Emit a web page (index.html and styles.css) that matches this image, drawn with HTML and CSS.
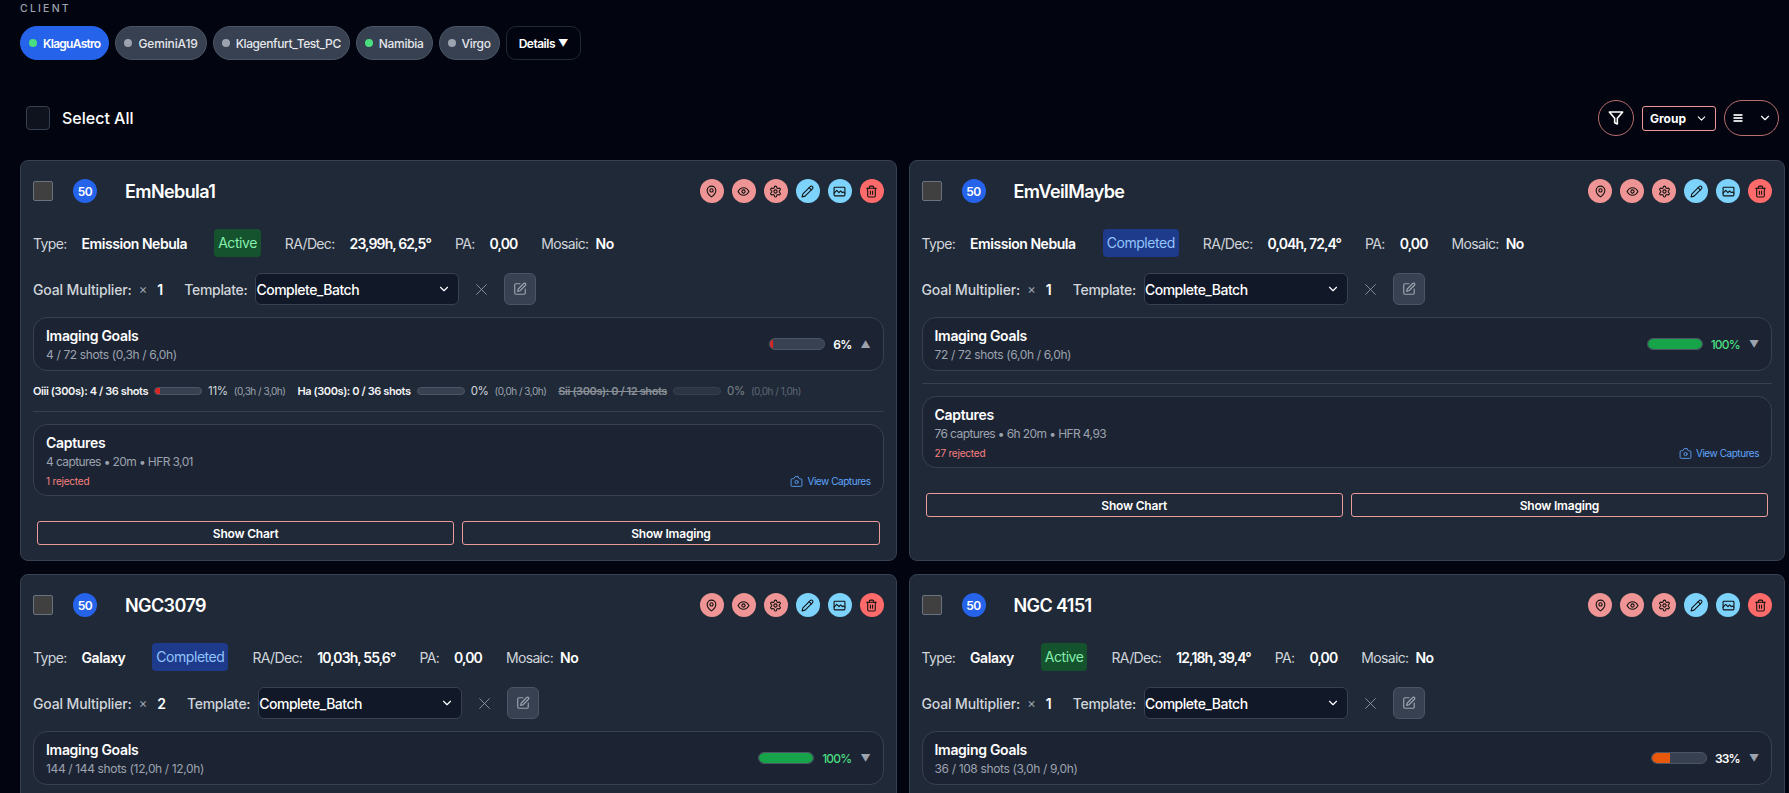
FILE: index.html
```html
<!DOCTYPE html>
<html lang="en">
<head>
<meta charset="utf-8">
<title>Targets</title>
<link rel="stylesheet" href="styles.css">
</head>
<body>
<svg class="sprite" width="0" height="0" aria-hidden="true">
  <symbol id="i-pin" viewBox="0 0 24 24"><path d="M20 10c0 6-8 12-8 12s-8-6-8-12a8 8 0 0 1 16 0Z"/><circle cx="12" cy="10" r="3"/></symbol>
  <symbol id="i-eye" viewBox="0 0 24 24"><path d="M2 12s3.6-7 10-7 10 7 10 7-3.6 7-10 7-10-7-10-7Z"/><circle cx="12" cy="12" r="3"/></symbol>
  <symbol id="i-cog" viewBox="0 0 24 24"><path d="M12.22 2h-.44a2 2 0 0 0-2 2v.18a2 2 0 0 1-1 1.73l-.43.25a2 2 0 0 1-2 0l-.15-.08a2 2 0 0 0-2.73.73l-.22.38a2 2 0 0 0 .73 2.73l.15.1a2 2 0 0 1 1 1.72v.51a2 2 0 0 1-1 1.74l-.15.09a2 2 0 0 0-.73 2.73l.22.38a2 2 0 0 0 2.73.73l.15-.08a2 2 0 0 1 2 0l.43.25a2 2 0 0 1 1 1.73V20a2 2 0 0 0 2 2h.44a2 2 0 0 0 2-2v-.18a2 2 0 0 1 1-1.73l.43-.25a2 2 0 0 1 2 0l.15.08a2 2 0 0 0 2.73-.73l.22-.39a2 2 0 0 0-.73-2.73l-.15-.08a2 2 0 0 1-1-1.74v-.5a2 2 0 0 1 1-1.74l.15-.09a2 2 0 0 0 .73-2.73l-.22-.38a2 2 0 0 0-2.73-.73l-.15.08a2 2 0 0 1-2 0l-.43-.25a2 2 0 0 1-1-1.73V4a2 2 0 0 0-2-2z"/><circle cx="12" cy="12" r="3"/></symbol>
  <symbol id="i-pencil" viewBox="0 0 24 24"><path d="M17 3a2.85 2.83 0 1 1 4 4L7.5 20.5 2 22l1.5-5.5Z"/><path d="m15 5 4 4"/></symbol>
  <symbol id="i-image" viewBox="0 0 24 24"><rect x="2" y="4" width="20" height="16" rx="1.5"/><path d="M2 15l5-5 4 4 3-3 3 3 2-1 3 2"/></symbol>
  <symbol id="i-trash" viewBox="0 0 24 24"><path d="M3 6h18"/><path d="M19 6v14a2 2 0 0 1-2 2H7a2 2 0 0 1-2-2V6"/><path d="M8 6V4a2 2 0 0 1 2-2h4a2 2 0 0 1 2 2v2"/><path d="M10 11v6"/><path d="M14 11v6"/></symbol>
  <symbol id="i-filter" viewBox="0 0 24 24"><polygon points="22 3 2 3 10 12.46 10 19 14 21 14 12.46 22 3"/></symbol>
  <symbol id="i-chevron" viewBox="0 0 24 24"><polyline points="6 9 12 15 18 9"/></symbol>
  <symbol id="i-menu" viewBox="0 0 24 24"><path d="M3 6h18"/><path d="M3 12h18"/><path d="M3 18h18"/></symbol>
  <symbol id="i-x" viewBox="0 0 24 24"><path d="M3 3l18 18"/><path d="M21 3 3 21"/></symbol>
  <symbol id="i-edit" viewBox="0 0 24 24"><path d="M12 3H5a2 2 0 0 0-2 2v14a2 2 0 0 0 2 2h14a2 2 0 0 0 2-2v-7"/><path d="M18.375 2.625a2.121 2.121 0 1 1 3 3L12 15l-4 1 1-4Z"/></symbol>
  <symbol id="i-camera" viewBox="0 0 24 24"><path d="M14.5 3h-5L7 7H4a2 2 0 0 0-2 2v10a2 2 0 0 0 2 2h16a2 2 0 0 0 2-2V9a2 2 0 0 0-2-2h-3l-2.5-4z"/><circle cx="12" cy="13" r="3"/></symbol>
</svg>

<main class="page">
  <section class="clients">
    <div class="clients-label">CLIENT</div>
    <div class="pills">
      <button class="pill pill-active"><span class="dot dot-on"></span>KlaguAstro</button>
      <button class="pill pill-roomy"><span class="dot"></span>GeminiA19</button>
      <button class="pill pill-long"><span class="dot"></span>Klagenfurt_Test_PC</button>
      <button class="pill"><span class="dot dot-on"></span>Namibia</button>
      <button class="pill"><span class="dot"></span>Virgo</button>
      <button class="pill pill-details">Details <span class="caret">▼</span></button>
    </div>
  </section>

  <section class="toolbar">
    <label class="select-all"><span class="box box-lg"></span>Select All</label>
    <div class="tools">
      <button class="tool tool-round"><svg class="ico ico-filter"><use href="#i-filter"/></svg></button>
      <button class="tool tool-group">Group<svg class="ico ico-chev"><use href="#i-chevron"/></svg></button>
      <button class="tool tool-menu"><svg class="ico ico-menu"><use href="#i-menu"/></svg><svg class="ico ico-chev"><use href="#i-chevron"/></svg></button>
    </div>
  </section>

  <section class="grid">

    <article class="card">
      <header class="card-head">
        <span class="box"></span><span class="prio">50</span><h2 class="name">EmNebula1</h2>
        <div class="actions">
          <button class="act act-rose"><svg class="ico"><use href="#i-pin"/></svg></button>
          <button class="act act-rose"><svg class="ico"><use href="#i-eye"/></svg></button>
          <button class="act act-rose"><svg class="ico"><use href="#i-cog"/></svg></button>
          <button class="act act-sky"><svg class="ico"><use href="#i-pencil"/></svg></button>
          <button class="act act-sky"><svg class="ico"><use href="#i-image"/></svg></button>
          <button class="act act-red"><svg class="ico"><use href="#i-trash"/></svg></button>
        </div>
      </header>
      <div class="meta">
        <span class="kv"><span class="k">Type:</span><b class="v">Emission Nebula</b></span>
        <span class="status status-active">Active</span>
        <span class="kv"><span class="k">RA/Dec:</span><b class="v v-num">23,99h, 62,5°</b></span>
        <span class="kv"><span class="k">PA:</span><b class="v v-num">0,00</b></span>
        <span class="kv kv-tight"><span class="k">Mosaic:</span><b class="v">No</b></span>
      </div>
      <div class="settings">
        <span class="k k-strong">Goal Multiplier:</span><span class="times">×</span><b class="mult">1</b>
        <span class="k k-strong tpl">Template:</span>
        <span class="select">Complete_Batch<svg class="ico ico-chev"><use href="#i-chevron"/></svg></span>
        <svg class="ico ico-x"><use href="#i-x"/></svg>
        <button class="edit"><svg class="ico"><use href="#i-edit"/></svg></button>
      </div>
      <div class="panel panel-goals">
        <div><h3 class="panel-title">Imaging Goals</h3><p class="panel-sub">4 / 72 shots (0,3h / 6,0h)</p></div>
        <div class="goal-right">
          <span class="bar"><span class="fill fill-red fill-6"></span></span>
          <span class="pct">6%</span><span class="tri">▲</span>
        </div>
      </div>
      <div class="filters">
        <span class="flt"><b>Oiii (300s): 4 / 36 shots</b><span class="bar bar-sm"><span class="fill fill-red fill-11"></span></span><span class="fp">11%</span><span class="ft">(0,3h / 3,0h)</span></span>
        <span class="flt"><b>Ha (300s): 0 / 36 shots</b><span class="bar bar-sm"></span><span class="fp">0%</span><span class="ft">(0,0h / 3,0h)</span></span>
        <span class="flt flt-off"><b>Sii (300s): 0 / 12 shots</b><span class="bar bar-sm"></span><span class="fp">0%</span><span class="ft">(0,0h / 1,0h)</span></span>
      </div>
      <hr class="rule">
      <div class="panel panel-caps">
        <h3 class="panel-title">Captures</h3>
        <p class="panel-sub panel-sub-caps">4 captures • 20m • HFR 3,01</p>
        <div class="caps-foot"><span class="rej">1 rejected</span><a class="view"><svg class="ico"><use href="#i-camera"/></svg>View Captures</a></div>
      </div>
      <div class="btns"><button class="btn">Show Chart</button><button class="btn">Show Imaging</button></div>
    </article>

    <article class="card">
      <header class="card-head">
        <span class="box"></span><span class="prio">50</span><h2 class="name">EmVeilMaybe</h2>
        <div class="actions">
          <button class="act act-rose"><svg class="ico"><use href="#i-pin"/></svg></button>
          <button class="act act-rose"><svg class="ico"><use href="#i-eye"/></svg></button>
          <button class="act act-rose"><svg class="ico"><use href="#i-cog"/></svg></button>
          <button class="act act-sky"><svg class="ico"><use href="#i-pencil"/></svg></button>
          <button class="act act-sky"><svg class="ico"><use href="#i-image"/></svg></button>
          <button class="act act-red"><svg class="ico"><use href="#i-trash"/></svg></button>
        </div>
      </header>
      <div class="meta">
        <span class="kv"><span class="k">Type:</span><b class="v">Emission Nebula</b></span>
        <span class="status status-done">Completed</span>
        <span class="kv"><span class="k">RA/Dec:</span><b class="v v-num">0,04h, 72,4°</b></span>
        <span class="kv"><span class="k">PA:</span><b class="v v-num">0,00</b></span>
        <span class="kv kv-tight"><span class="k">Mosaic:</span><b class="v">No</b></span>
      </div>
      <div class="settings">
        <span class="k k-strong">Goal Multiplier:</span><span class="times">×</span><b class="mult">1</b>
        <span class="k k-strong tpl">Template:</span>
        <span class="select">Complete_Batch<svg class="ico ico-chev"><use href="#i-chevron"/></svg></span>
        <svg class="ico ico-x"><use href="#i-x"/></svg>
        <button class="edit"><svg class="ico"><use href="#i-edit"/></svg></button>
      </div>
      <div class="panel panel-goals">
        <div><h3 class="panel-title">Imaging Goals</h3><p class="panel-sub">72 / 72 shots (6,0h / 6,0h)</p></div>
        <div class="goal-right">
          <span class="bar"><span class="fill fill-green fill-100"></span></span>
          <span class="pct pct-done">100%</span><span class="tri">▼</span>
        </div>
      </div>
      <hr class="rule">
      <div class="panel panel-caps">
        <h3 class="panel-title">Captures</h3>
        <p class="panel-sub panel-sub-caps">76 captures • 6h 20m • HFR 4,93</p>
        <div class="caps-foot"><span class="rej">27 rejected</span><a class="view"><svg class="ico"><use href="#i-camera"/></svg>View Captures</a></div>
      </div>
      <div class="btns"><button class="btn">Show Chart</button><button class="btn">Show Imaging</button></div>
    </article>

    <article class="card">
      <header class="card-head">
        <span class="box"></span><span class="prio">50</span><h2 class="name">NGC3079</h2>
        <div class="actions">
          <button class="act act-rose"><svg class="ico"><use href="#i-pin"/></svg></button>
          <button class="act act-rose"><svg class="ico"><use href="#i-eye"/></svg></button>
          <button class="act act-rose"><svg class="ico"><use href="#i-cog"/></svg></button>
          <button class="act act-sky"><svg class="ico"><use href="#i-pencil"/></svg></button>
          <button class="act act-sky"><svg class="ico"><use href="#i-image"/></svg></button>
          <button class="act act-red"><svg class="ico"><use href="#i-trash"/></svg></button>
        </div>
      </header>
      <div class="meta">
        <span class="kv"><span class="k">Type:</span><b class="v">Galaxy</b></span>
        <span class="status status-done">Completed</span>
        <span class="kv"><span class="k">RA/Dec:</span><b class="v v-num">10,03h, 55,6°</b></span>
        <span class="kv"><span class="k">PA:</span><b class="v v-num">0,00</b></span>
        <span class="kv kv-tight"><span class="k">Mosaic:</span><b class="v">No</b></span>
      </div>
      <div class="settings">
        <span class="k k-strong">Goal Multiplier:</span><span class="times">×</span><b class="mult">2</b>
        <span class="k k-strong tpl">Template:</span>
        <span class="select">Complete_Batch<svg class="ico ico-chev"><use href="#i-chevron"/></svg></span>
        <svg class="ico ico-x"><use href="#i-x"/></svg>
        <button class="edit"><svg class="ico"><use href="#i-edit"/></svg></button>
      </div>
      <div class="panel panel-goals">
        <div><h3 class="panel-title">Imaging Goals</h3><p class="panel-sub">144 / 144 shots (12,0h / 12,0h)</p></div>
        <div class="goal-right">
          <span class="bar"><span class="fill fill-green fill-100"></span></span>
          <span class="pct pct-done">100%</span><span class="tri">▼</span>
        </div>
      </div>
    </article>

    <article class="card">
      <header class="card-head">
        <span class="box"></span><span class="prio">50</span><h2 class="name">NGC 4151</h2>
        <div class="actions">
          <button class="act act-rose"><svg class="ico"><use href="#i-pin"/></svg></button>
          <button class="act act-rose"><svg class="ico"><use href="#i-eye"/></svg></button>
          <button class="act act-rose"><svg class="ico"><use href="#i-cog"/></svg></button>
          <button class="act act-sky"><svg class="ico"><use href="#i-pencil"/></svg></button>
          <button class="act act-sky"><svg class="ico"><use href="#i-image"/></svg></button>
          <button class="act act-red"><svg class="ico"><use href="#i-trash"/></svg></button>
        </div>
      </header>
      <div class="meta">
        <span class="kv"><span class="k">Type:</span><b class="v">Galaxy</b></span>
        <span class="status status-active">Active</span>
        <span class="kv"><span class="k">RA/Dec:</span><b class="v v-num">12,18h, 39,4°</b></span>
        <span class="kv"><span class="k">PA:</span><b class="v v-num">0,00</b></span>
        <span class="kv kv-tight"><span class="k">Mosaic:</span><b class="v">No</b></span>
      </div>
      <div class="settings">
        <span class="k k-strong">Goal Multiplier:</span><span class="times">×</span><b class="mult">1</b>
        <span class="k k-strong tpl">Template:</span>
        <span class="select">Complete_Batch<svg class="ico ico-chev"><use href="#i-chevron"/></svg></span>
        <svg class="ico ico-x"><use href="#i-x"/></svg>
        <button class="edit"><svg class="ico"><use href="#i-edit"/></svg></button>
      </div>
      <div class="panel panel-goals">
        <div><h3 class="panel-title">Imaging Goals</h3><p class="panel-sub">36 / 108 shots (3,0h / 9,0h)</p></div>
        <div class="goal-right">
          <span class="bar"><span class="fill fill-orange fill-33"></span></span>
          <span class="pct">33%</span><span class="tri">▼</span>
        </div>
      </div>
    </article>

  </section>
</main>
</body>
</html>
```
FILE: styles.css
```css
* { box-sizing: border-box; }
html, body { height: 100%; overflow: hidden; }
body {
  margin: 0;
  background: #020510;
  color: #fff;
  font-family: Inter, "Liberation Sans", sans-serif;
  font-size: 14px;
}
button { font-family: inherit; color: inherit; cursor: pointer; padding: 0; background: none; border: 0; }
h2, h3, p { margin: 0; }
.sprite { position: absolute; }

.ico {
  width: 14px;
  height: 14px;
  fill: none;
  stroke: currentColor;
  stroke-width: 2;
  stroke-linecap: round;
  stroke-linejoin: round;
  flex: none;
}

.page { padding: 2px 4px 0 20px; }

.clients-label {
  font-size: 10.5px;
  line-height: 14px;
  letter-spacing: 2.2px;
  color: #9ca3af;
  font-weight: 500;
}
.pills { display: flex; gap: 6px; margin-top: 10px; }
.pill {
  height: 34px;
  display: inline-flex;
  align-items: center;
  gap: 6px;
  padding: 0 8px;
  border-radius: 17px;
  background: #374151;
  border: 1px solid #4b5563;
  color: #e5e7eb;
  font-size: 12px;
  font-weight: 500;
  letter-spacing: -0.3px;
}
.pill-roomy { letter-spacing: -0.14px; }
.pill-long { letter-spacing: -0.4px; }
.pill-active { background: #2563eb; border-color: #2563eb; color: #fff; font-weight: 600; letter-spacing: -0.72px; }
.pill-details {
  background: #020510;
  border: 1px solid #1f2937;
  border-radius: 10px;
  padding: 0 12px;
  color: #fff;
  font-weight: 600;
  gap: 3px;
  letter-spacing: -0.5px;
}
.caret { font-size: 10px; letter-spacing: 0; }
.dot { width: 8px; height: 8px; border-radius: 50%; background: #9ca3af; }
.dot-on { background: #4ade80; }

.toolbar {
  display: flex;
  align-items: center;
  justify-content: space-between;
  height: 36px;
  margin-top: 40px;
  padding: 0 6px;
}
.select-all { display: flex; align-items: center; gap: 12px; font-size: 16px; font-weight: 500; }
.box {
  width: 20px;
  height: 20px;
  border-radius: 2px;
  background: #404040;
  border: 1px solid #6b7280;
  flex: none;
}
.box-lg { width: 24px; height: 24px; background: #0f131d; border-color: #374151; border-radius: 4px; }
.tools { display: flex; align-items: center; gap: 8px; }
.tool { border: 1px solid #b96f6f; display: inline-flex; align-items: center; justify-content: center; background: transparent; }
.tool-round { width: 36px; height: 36px; border-radius: 50%; }
.ico-filter { width: 16px; height: 16px; stroke-width: 2.4; }
.tool-group {
  width: 74px;
  height: 25px;
  border-radius: 3px;
  border-color: #ef9a9a;
  font-size: 12px;
  font-weight: 700;
  gap: 9px;
}
.tool-menu { width: 55px; height: 36px; border-radius: 18px; gap: 14px; margin-left: 0; }
.ico-menu { width: 12px; height: 12px; stroke-linecap: butt; stroke-width: 3.4; }
.ico-chev { width: 14px; height: 14px; }
.tool-group .ico-chev { width: 13px; height: 13px; }

.grid {
  display: grid;
  grid-template-columns: 1fr 1fr;
  gap: 13px 12px;
  margin-top: 24px;
}
.card {
  background: #1f2937;
  border: 1px solid #374151;
  border-radius: 8px;
  padding: 18px 12px 15px;
}
.card-head { display: flex; align-items: center; height: 24px; }
.prio {
  width: 24px;
  height: 24px;
  margin-left: 20px;
  border-radius: 50%;
  background: #2563eb;
  font-size: 12px;
  font-weight: 600;
  letter-spacing: -0.5px;
  display: flex;
  align-items: center;
  justify-content: center;
  flex: none;
}
.name { margin-left: 28px; font-size: 18px; font-weight: 600; letter-spacing: -0.6px; }
.actions { margin-left: auto; display: flex; gap: 8px; }
.act {
  width: 24px;
  height: 24px;
  border-radius: 50%;
  color: #111;
  display: flex;
  align-items: center;
  justify-content: center;
}
.act .ico { width: 13px; height: 13px; stroke-width: 2; }
.act-rose { background: #f09595; }
.act-sky { background: #7dd3fc; }
.act-red { background: #ff6b6b; }

.meta { display: flex; align-items: center; gap: 24px; margin-top: 26px; height: 28px; letter-spacing: -0.45px; }
.kv { display: inline-flex; gap: 15px; align-items: center; }
.kv-tight { gap: 7px; }
.k { color: #d1d5db; letter-spacing: -0.65px; }
.k-strong { font-weight: 500; letter-spacing: -0.15px; }
.v { font-weight: 600; color: #fff; }
.v-num { letter-spacing: -0.9px; }
.status { height: 28px; padding: 0 4px; line-height: 28px; border-radius: 4px; margin-left: 3px; }
.status-active { background: #14532d; color: #86efac; }
.status-done { background: #1e3a8a; color: #93c5fd; }

.settings { display: flex; align-items: center; height: 32px; margin-top: 16px; }
.times { color: #9ca3af; font-size: 13px; margin-left: 7px; }
.mult { margin-left: 10px; font-weight: 600; }
.tpl { margin-left: 21px; letter-spacing: -0.3px; }
.select {
  width: 204px;
  height: 32px;
  margin-left: 8px;
  padding: 0 7px 0 0;
  display: flex;
  align-items: center;
  justify-content: space-between;
  background: #111827;
  border: 1px solid #374151;
  border-radius: 6px;
  font-weight: 500;
  color: #fff;
  letter-spacing: -0.5px;
}
.ico-x { width: 13px; height: 13px; margin-left: 16px; color: #9ca3af; stroke-width: 1.5; }
.edit {
  width: 32px;
  height: 32px;
  margin-left: 16px;
  background: #374151;
  border: 1px solid #4b5563;
  border-radius: 6px;
  color: #9ca3af;
  display: flex;
  align-items: center;
  justify-content: center;
}

.panel { background: #1c2433; border: 1px solid #374151; border-radius: 14px; padding: 0 12px; }
.panel-goals {
  height: 54px;
  margin-top: 12px;
  padding-top: 2px;
  display: flex;
  align-items: center;
  justify-content: space-between;
}
.panel-title { font-size: 14px; font-weight: 600; line-height: 20px; letter-spacing: -0.3px; }
.panel-sub { font-size: 12px; line-height: 18px; color: #9ca3af; letter-spacing: -0.36px; }
.panel-sub-caps { letter-spacing: -0.6px; }
.goal-right { display: flex; align-items: center; margin-top: -2px; }
.bar {
  display: block;
  width: 56px;
  height: 12px;
  background: #374151;
  border: 1px solid #4b5563;
  border-radius: 6px;
  overflow: hidden;
}
.fill { display: block; height: 100%; border-radius: 6px 0 0 6px; }
.fill-red { background: #dc2626; }
.fill-green { background: #16a34a; border-radius: 6px; }
.fill-orange { background: #ea580c; }
.fill-6 { width: 6%; }
.fill-11 { width: 11%; }
.fill-33 { width: 33%; }
.fill-100 { width: 100%; }
.pct { margin-left: 8px; font-size: 12px; font-weight: 600; color: #fff; letter-spacing: -0.8px; }
.pct-done { color: #4ade80; font-weight: 500; }
.tri { margin-left: 9px; font-size: 10px; color: #9ca3af; line-height: 12px; }

.filters { display: flex; gap: 12px; margin-top: 11px; height: 17px; align-items: center; }
.flt { display: inline-flex; align-items: center; gap: 6px; }
.flt b { font-size: 11px; font-weight: 600; color: #f3f4f6; white-space: nowrap; letter-spacing: -0.4px; }
.bar-sm { width: 48px; height: 8px; border-radius: 4px; }
.fp { font-size: 11.5px; color: #d1d5db; letter-spacing: -0.3px; }
.ft { font-size: 10px; color: #9ca3af; letter-spacing: -0.5px; }
.flt-off { opacity: 0.5; }
.flt-off b { text-decoration: line-through; }

.rule { border: 0; border-top: 1px solid #374151; margin: 12px 0; }
.panel-caps { height: 72px; padding-top: 8px; }
.caps-foot { display: flex; align-items: center; justify-content: space-between; margin-top: 1px; height: 18px; }
.rej { font-size: 10px; color: #f98080; letter-spacing: -0.2px; }
.view { display: inline-flex; align-items: center; gap: 4px; font-size: 10px; color: #60a5fa; letter-spacing: -0.45px; }
.view .ico { width: 13px; height: 13px; stroke-width: 1.6; }

.btns { display: grid; grid-template-columns: 1fr 1fr; gap: 8px; padding: 0 4px; margin-top: 25px; }
.btn {
  height: 24px;
  border: 1px solid #ef9a9a;
  border-radius: 3px;
  background: transparent;
  font-size: 12px;
  font-weight: 600;
  color: #fff;
  letter-spacing: -0.2px;
}
```
